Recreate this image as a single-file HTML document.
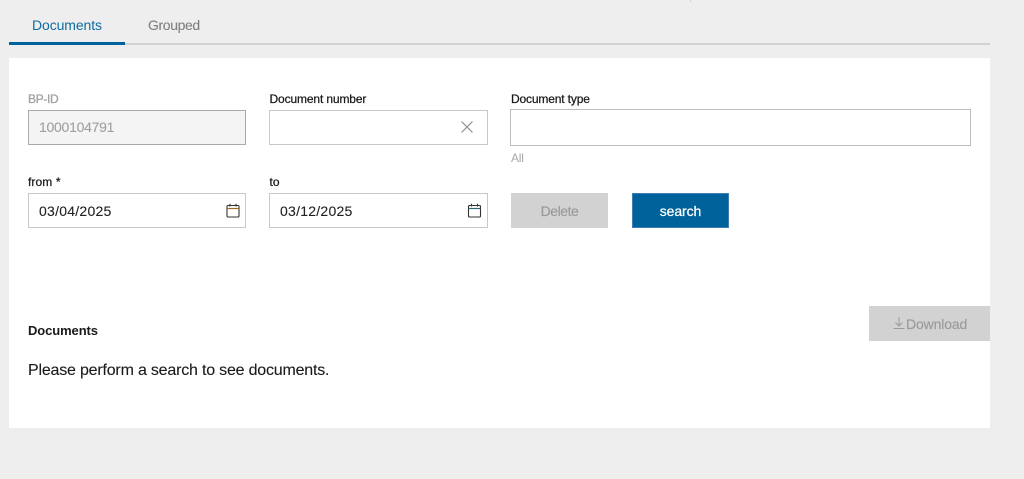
<!DOCTYPE html>
<html>
<head>
<meta charset="utf-8">
<style>
html,body{margin:0;padding:0;width:1024px;height:479px;overflow:hidden;background:#eeeeee;font-family:"Liberation Sans",sans-serif;}
.a{position:absolute;white-space:nowrap;}
.box{position:absolute;box-sizing:border-box;border:1px solid #c8c8c8;background:#fff;}
.lbl{font-size:12px;line-height:14px;color:#1a1a1a;-webkit-text-stroke:.25px #1a1a1a;}
.val{font-size:14px;line-height:16px;color:#222;letter-spacing:.25px;-webkit-text-stroke:.1px #222;}
.btn{position:absolute;box-sizing:border-box;text-align:center;font-size:14px;}
</style>
</head>
<body>
<div class="a" style="left:690px;top:0;width:1px;height:2px;background:#d4d4d4"></div>

<div class="a" style="left:32px;top:17px;font-size:14px;line-height:16px;color:#0f6ca3;letter-spacing:-.1px">Documents</div>
<div class="a" style="left:148px;top:17px;font-size:14px;line-height:16px;color:#808080;letter-spacing:-.38px;-webkit-text-stroke:.1px #808080">Grouped</div>
<div class="a" style="left:9px;top:43px;width:981px;height:2px;background:#d2d2d2"></div>
<div class="a" style="left:9px;top:42px;width:116px;height:3px;background:#00629b"></div>

<div class="a" style="left:9px;top:58px;width:981px;height:370px;background:#fff"></div>

<div class="a lbl" style="left:28px;top:92px;color:#a0a0a0;-webkit-text-stroke:.3px #a0a0a0;letter-spacing:-.35px">BP-ID</div>
<div class="box" style="left:28px;top:110px;width:218px;height:35px;background:#f4f4f4;border-color:#aaa"></div>
<div class="a val" style="left:39px;top:119px;color:#a0a0a0;letter-spacing:-.27px;-webkit-text-stroke:.1px #a0a0a0">1000104791</div>

<div class="a lbl" style="left:269.5px;top:92px;letter-spacing:-.13px">Document number</div>
<div class="box" style="left:269px;top:110px;width:219px;height:35px"></div>
<svg class="a" style="left:460px;top:120px" width="14" height="14" viewBox="0 0 14 14"><path d="M1.5 1.5L12.5 12.5M12.5 1.5L1.5 12.5" stroke="#8a8a8a" stroke-width="1.1" fill="none"/></svg>

<div class="a lbl" style="left:511px;top:92px;letter-spacing:-.15px">Document type</div>
<div class="box" style="left:510px;top:109px;width:461px;height:37px;border-color:#bdbdbd"></div>
<div class="a" style="left:511px;top:151px;font-size:12px;line-height:14px;color:#a8a8a8;letter-spacing:-.2px">All</div>

<div class="a lbl" style="left:28px;top:175px;letter-spacing:.1px">from *</div>
<div class="box" style="left:28px;top:193px;width:218px;height:35px"></div>
<div class="a val" style="left:39px;top:203px">03/04/2025</div>
<svg class="a" style="left:225px;top:203px" width="15" height="15" viewBox="0 0 15 15"><rect x="2" y="2.5" width="12" height="11.5" rx="1" fill="none" stroke="#333" stroke-width="1.1"/><path d="M2 5.5H14" stroke="#a06a20" stroke-width="1.2"/><path d="M5 .8V3.5M11 .8V3.5" stroke="#333" stroke-width="1.1"/></svg>

<div class="a lbl" style="left:269.5px;top:175px">to</div>
<div class="box" style="left:269px;top:193px;width:219px;height:35px"></div>
<div class="a val" style="left:280px;top:203px">03/12/2025</div>
<svg class="a" style="left:467px;top:203px" width="15" height="15" viewBox="0 0 15 15"><rect x="1.5" y="2.5" width="12" height="11.5" rx="1" fill="none" stroke="#333" stroke-width="1.1"/><path d="M1.5 5.5H13.5" stroke="#2a6a70" stroke-width="1.2"/><path d="M4.5 .8V3.5M10.5 .8V3.5" stroke="#333" stroke-width="1.1"/></svg>

<div class="btn" style="left:511px;top:193px;width:97px;height:35px;line-height:36px;background:#d2d2d2;color:#9a9a9a;letter-spacing:-.45px;-webkit-text-stroke:.15px #9a9a9a">Delete</div>
<div class="btn" style="left:632px;top:193px;width:97px;height:35px;line-height:34px;background:#00629b;border:1px solid #3f7fb0;color:#fff;letter-spacing:-.1px;-webkit-text-stroke:.25px #fff">search</div>

<div class="a" style="left:28px;top:323px;font-size:13px;line-height:16px;font-weight:bold;color:#1a1a1a;letter-spacing:-.1px">Documents</div>
<div class="btn" style="left:869px;top:306px;width:121px;height:35px;background:#d2d2d2"></div>
<svg class="a" style="left:892px;top:316px" width="14" height="14" viewBox="0 0 14 14"><path d="M7 1V10M3.5 6.5L7 10L10.5 6.5M1.5 12.5H12.5" fill="none" stroke="#9a9a9a" stroke-width="1"/></svg>
<div class="a" style="left:906px;top:316px;font-size:14px;line-height:16px;color:#9a9a9a;letter-spacing:-.14px;-webkit-text-stroke:.15px #9a9a9a">Download</div>

<div class="a" style="left:28px;top:362px;font-size:16px;line-height:18px;color:#1a1a1a;letter-spacing:-.2px;-webkit-text-stroke:.1px #1a1a1a">Please perform a search to see documents.</div>
</body>
</html>
